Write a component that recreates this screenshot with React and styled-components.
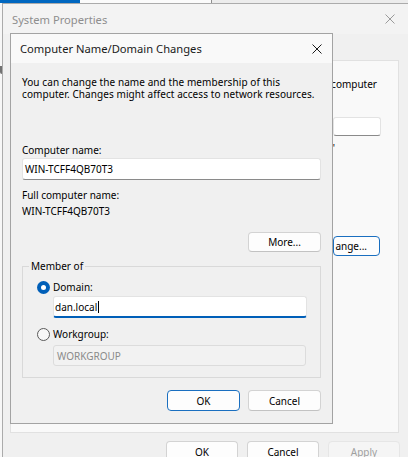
import React from "react";
import styled, { createGlobalStyle, css } from "styled-components";

const FONT = `"Noto Sans", "Liberation Sans", sans-serif`;

const Global = createGlobalStyle`
  html, body { margin: 0; padding: 0; background: #f4f4f4; }
  body { font-family: ${FONT}; font-size: 10px; color: #000; }
  * { box-sizing: border-box; }
`;

const Desktop = styled.div`
  position: relative;
  width: 408px;
  height: 457px;
  overflow: hidden;
  background: #f7f7f7;
`;

/* strip of the window lying behind everything */
const BackStrip = styled.div`
  position: absolute;
  top: 0;
  left: 0;
  right: 0;
  height: 3px;
  display: flex;
  background: #ececec;
`;

const BackSeg = styled.div`
  width: ${(p) => p.$w}px;
  background: ${(p) => p.$c};
  border-right: ${(p) => (p.$line ? "1px solid #8f8f8f" : "none")};
`;

const BackEdge = styled.div`
  position: absolute;
  left: 0;
  top: 66px;
  width: 2px;
  height: 8px;
  overflow: hidden;
  border-left: 2px solid #3a3a3a;
  border-radius: 0 0 0 2px;
  opacity: 0.7;
`;

/* ---------- System Properties window ---------- */
const SysWindow = styled.section`
  position: absolute;
  left: 2px;
  top: 3px;
  width: 412px;
  height: 470px;
  background: #f0f0f0;
  border: 1px solid #ababab;
  display: flex;
  flex-direction: column;
`;

const TitleBar = styled.header`
  height: ${(p) => p.$h}px;
  flex: none;
  display: flex;
  align-items: center;
  background: ${(p) => p.$bg};
  padding-left: 9px;
`;

const TitleText = styled.span`
  font-size: 11.2px;
  color: ${(p) => (p.$inactive ? "#8e8e8e" : "#1a1a1a")};
  white-space: nowrap;
`;

const CloseButton = styled.div`
  margin-left: auto;
  width: ${(p) => p.$w}px;
  height: 100%;
  display: flex;
  align-items: center;
  justify-content: center;
`;

const TabStrip = styled.div`
  height: 26px;
  flex: none;
`;

const SysBody = styled.div`
  display: flex;
  flex-direction: column;
  padding-left: 7px;
`;

const Panel = styled.div`
  width: 389px;
  height: 373px;
  background: #f9f9f9;
  border: 1px solid #e1e1e1;
  padding: 17px 17px 0 0;
  display: flex;
  flex-direction: column;
  align-items: flex-end;
`;

const PanelText = styled.div`
  line-height: 12px;
  white-space: nowrap;
  margin-top: ${(p) => p.$mt || 0}px;
  margin-right: ${(p) => p.$mr || 0}px;
`;

const ButtonRow = styled.div`
  display: flex;
  justify-content: flex-end;
  gap: ${(p) => p.$gap}px;
  width: ${(p) => p.$w}px;
  margin-top: ${(p) => p.$mt}px;
`;

const Button = styled.div`
  width: ${(p) => p.$w}px;
  height: ${(p) => p.$h}px;
  flex: none;
  display: flex;
  align-items: center;
  justify-content: ${(p) => p.$justify || "center"};
  padding-right: ${(p) => p.$pr || 0}px;
  border-radius: 4px;
  background: #fdfdfd;
  border: 1px solid #d3d3d3;
  border-bottom-color: #c2c2c2;
  color: #000;
  white-space: nowrap;
  align-self: ${(p) => p.$self || "auto"};
  margin-top: ${(p) => p.$mt || 0}px;
  margin-right: ${(p) => p.$mr || 0}px;
  ${(p) =>
    p.$default &&
    css`
      border: 1px solid #1a6fc0;
    `}
  ${(p) =>
    p.$disabled &&
    css`
      background: #f5f5f5;
      border: 1px solid #e6e6e6;
      color: #a0a0a0;
    `}
`;

/* ---------- Computer Name / Domain Changes dialog ---------- */
const Dialog = styled.section`
  position: absolute;
  left: 10px;
  top: 33px;
  width: 323px;
  background: #f0f0f0;
  border: 1px solid #a3a3a3;
  display: flex;
  flex-direction: column;
`;

const DialogBody = styled.div`
  display: flex;
  flex-direction: column;
  padding: 13px 11px 12px 11px;
`;

const Text = styled.div`
  line-height: 12px;
  white-space: nowrap;
  letter-spacing: ${(p) => p.$ls || 0}px;
  margin-top: ${(p) => p.$mt || 0}px;
`;

const Field = styled.div`
  height: ${(p) => p.$h || 22}px;
  width: ${(p) => (p.$w ? `${p.$w}px` : "auto")};
  flex: none;
  display: flex;
  align-items: center;
  padding-left: ${(p) => p.$pl ?? 2}px;
  margin-top: ${(p) => p.$mt || 0}px;
  margin-left: ${(p) => p.$ml || 0}px;
  background: #ffffff;
  border: 1px solid #e3e3e3;
  border-bottom: 1px solid #8a8a8a;
  border-radius: 3px;
  white-space: nowrap;
  ${(p) =>
    p.$focused &&
    css`
      border-bottom: 2px solid #005fb8;
    `}
  ${(p) =>
    p.$disabled &&
    css`
      background: #f2f2f2;
      border: 1px solid #dcdcdc;
      color: #8a8a8a;
    `}
`;

const Caret = styled.span`
  display: inline-block;
  width: 1px;
  height: 12px;
  background: #000;
  margin-left: 1px;
`;

const GroupBox = styled.fieldset`
  margin: 8px 0 0 0;
  padding: 8px 13px 11px 14px;
  border: 1px solid #d9d9d9;
  border-radius: 0;
  min-width: 0;
`;

const Legend = styled.legend`
  margin-left: -8px;
  padding: 0 2px;
  line-height: 12px;
`;

const GroupContent = styled.div`
  display: flex;
  flex-direction: column;
`;

const RadioRow = styled.div`
  display: flex;
  align-items: center;
  gap: 3px;
  height: 14px;
  margin-top: ${(p) => p.$mt || 0}px;
`;

const RadioDot = styled.span`
  width: 13px;
  height: 13px;
  border-radius: 50%;
  flex: none;
  display: flex;
  align-items: center;
  justify-content: center;
  ${(p) =>
    p.$checked
      ? css`
          background: #005fb8;
          &::after {
            content: "";
            width: 5px;
            height: 5px;
            border-radius: 50%;
            background: #fff;
          }
        `
      : css`
          background: #f7f7f7;
          border: 1px solid #5a5a5a;
        `}
`;

const DialogButtons = styled.div`
  display: flex;
  justify-content: flex-end;
  gap: 8px;
  margin-top: 12px;
`;

const XIcon = ({ color }) => (
  <svg width="10" height="10" viewBox="0 0 10 10" aria-hidden="true">
    <path d="M0.5 0.5 L9.5 9.5 M9.5 0.5 L0.5 9.5" stroke={color} strokeWidth="1" fill="none" />
  </svg>
);

export default function App() {
  return (
    <>
      <Global />
      <Desktop>
        <BackStrip>
          <BackSeg $w={80} $c="#0067c0" />
          <BackSeg $w={132} $c="#fbfbfb" $line />
        </BackStrip>
        <BackEdge />

        <SysWindow>
          <TitleBar $h={30} $bg="#f3f3f3">
            <TitleText $inactive>System Properties</TitleText>
            <CloseButton $w={46}>
              <XIcon color="#9a9a9a" />
            </CloseButton>
          </TitleBar>
          <TabStrip />
          <SysBody>
            <Panel>
              <PanelText $mr={4}>computer</PanelText>
              <Field $w={48} $h={19} $mt={27} />
              <PanelText $mt={6} $mr={46}>'</PanelText>
              <Button $w={47} $h={20} $mt={82} $mr={1} $justify="flex-end" $pr={12} $default>
                ange...
              </Button>
            </Panel>
            <ButtonRow $w={390} $gap={9} $mt={8}>
              <Button $w={72} $h={21}>OK</Button>
              <Button $w={72} $h={21}>Cancel</Button>
              <Button $w={72} $h={21} $disabled>Apply</Button>
            </ButtonRow>
          </SysBody>
        </SysWindow>

        <Dialog>
          <TitleBar $h={29} $bg="#f9f9f9">
            <TitleText>Computer Name/Domain Changes</TitleText>
            <CloseButton $w={30}>
              <XIcon color="#1a1a1a" />
            </CloseButton>
          </TitleBar>
          <DialogBody>
            <Text $ls={0.08}>You can change the name and the membership of this</Text>
            <Text $ls={0.08}>computer. Changes might affect access to network resources.</Text>
            <Text $mt={44}>Computer name:</Text>
            <Field $mt={2}>WIN-TCFF4QB70T3</Field>
            <Text $mt={9}>Full computer name:</Text>
            <Text $mt={4}>WIN-TCFF4QB70T3</Text>
            <Button $w={73} $h={20} $mt={15} $self="flex-end">
              More...
            </Button>
            <GroupBox>
              <Legend>Member of</Legend>
              <GroupContent>
                <RadioRow>
                  <RadioDot $checked />
                  <span>Domain:</span>
                </RadioRow>
                <Field $mt={2} $ml={16} $w={254} $pl={1} $focused>
                  dan.local
                  <Caret />
                </Field>
                <RadioRow $mt={9}>
                  <RadioDot />
                  <span>Workgroup:</span>
                </RadioRow>
                <Field $mt={4} $ml={16} $w={253} $h={21} $pl={3} $disabled>
                  WORKGROUP
                </Field>
              </GroupContent>
            </GroupBox>
            <DialogButtons>
              <Button $w={73} $h={21} $default>OK</Button>
              <Button $w={73} $h={21}>Cancel</Button>
            </DialogButtons>
          </DialogBody>
        </Dialog>
      </Desktop>
    </>
  );
}
